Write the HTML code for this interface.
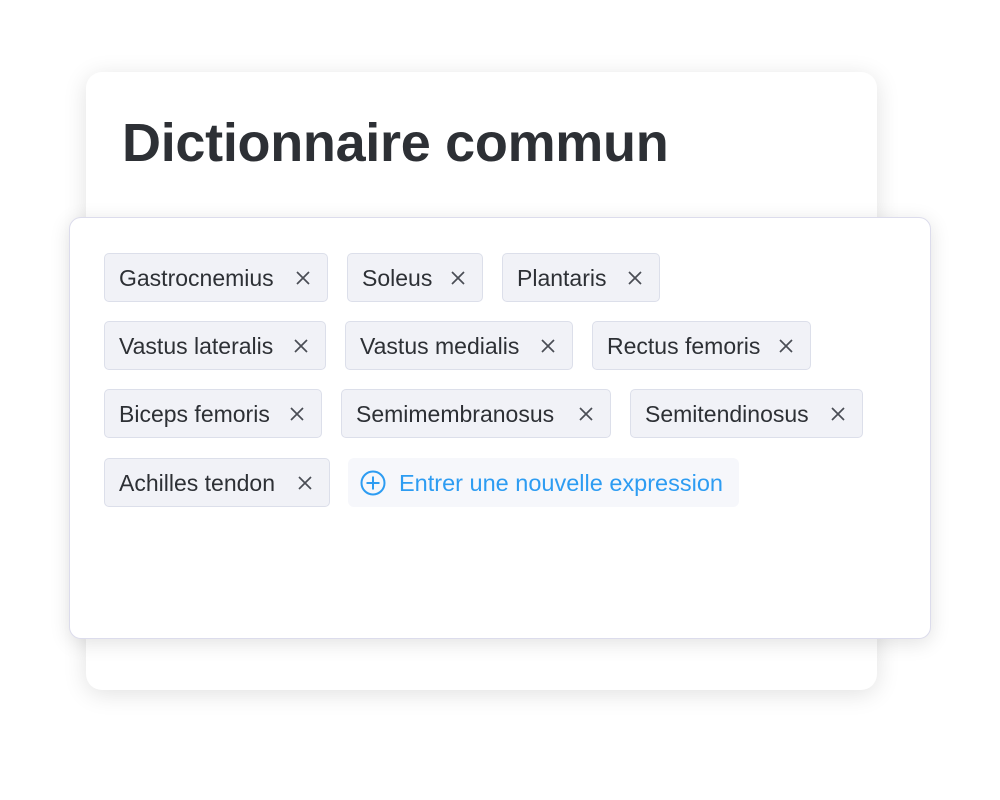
<!DOCTYPE html>
<html><head><meta charset="utf-8"><style>
body{margin:0;width:1000px;height:800px;background:#fff;position:relative;overflow:hidden;font-family:"Liberation Sans",sans-serif;}
.back{position:absolute;left:86px;top:72px;width:791px;height:618px;background:#fff;border-radius:16px;box-shadow:0 4px 24px rgba(0,0,0,0.12);}
.title{position:absolute;left:122px;top:112px;font-size:54px;font-weight:bold;color:#2d3035;letter-spacing:-0.3px;}
.front{position:absolute;left:69px;top:217px;width:860px;height:420px;background:#fff;border:1px solid #dcdcec;border-radius:12px;box-shadow:0 4px 20px rgba(0,0,0,0.12);}
.tag{position:absolute;height:49px;box-sizing:border-box;background:#f1f2f7;border:1.5px solid #dcdfea;border-radius:5px;color:#2d3035;font-size:23px;line-height:48px;padding-left:14px;}
.tag svg{position:absolute;right:17px;top:17px;}
.add{position:absolute;left:348px;top:458px;width:391px;height:49px;background:#f6f7fb;border-radius:6px;color:#2d9cf2;font-size:23.5px;line-height:50px;}
.add span{position:absolute;left:51px;}
.add svg{position:absolute;left:12px;top:12px;}
</style></head><body>
<div class="back"></div>
<div class="title">Dictionnaire commun</div>
<div class="front"></div>
<div class="tag" style="left:104px;top:253px;width:224px">Gastrocnemius<svg width="14" height="14" viewBox="0 0 14 14"><path d="M1 1L13 13M13 1L1 13" stroke="#4a4d55" stroke-width="1.7"/></svg></div>
<div class="tag" style="left:347px;top:253px;width:136px">Soleus<svg width="14" height="14" viewBox="0 0 14 14"><path d="M1 1L13 13M13 1L1 13" stroke="#4a4d55" stroke-width="1.7"/></svg></div>
<div class="tag" style="left:502px;top:253px;width:158px">Plantaris<svg width="14" height="14" viewBox="0 0 14 14"><path d="M1 1L13 13M13 1L1 13" stroke="#4a4d55" stroke-width="1.7"/></svg></div>
<div class="tag" style="left:104px;top:321px;width:222px">Vastus lateralis<svg width="14" height="14" viewBox="0 0 14 14"><path d="M1 1L13 13M13 1L1 13" stroke="#4a4d55" stroke-width="1.7"/></svg></div>
<div class="tag" style="left:345px;top:321px;width:228px">Vastus medialis<svg width="14" height="14" viewBox="0 0 14 14"><path d="M1 1L13 13M13 1L1 13" stroke="#4a4d55" stroke-width="1.7"/></svg></div>
<div class="tag" style="left:592px;top:321px;width:219px">Rectus femoris<svg width="14" height="14" viewBox="0 0 14 14"><path d="M1 1L13 13M13 1L1 13" stroke="#4a4d55" stroke-width="1.7"/></svg></div>
<div class="tag" style="left:104px;top:389px;width:218px">Biceps femoris<svg width="14" height="14" viewBox="0 0 14 14"><path d="M1 1L13 13M13 1L1 13" stroke="#4a4d55" stroke-width="1.7"/></svg></div>
<div class="tag" style="left:341px;top:389px;width:270px">Semimembranosus<svg width="14" height="14" viewBox="0 0 14 14"><path d="M1 1L13 13M13 1L1 13" stroke="#4a4d55" stroke-width="1.7"/></svg></div>
<div class="tag" style="left:630px;top:389px;width:233px">Semitendinosus<svg width="14" height="14" viewBox="0 0 14 14"><path d="M1 1L13 13M13 1L1 13" stroke="#4a4d55" stroke-width="1.7"/></svg></div>
<div class="tag" style="left:104px;top:458px;width:226px">Achilles tendon<svg width="14" height="14" viewBox="0 0 14 14"><path d="M1 1L13 13M13 1L1 13" stroke="#4a4d55" stroke-width="1.7"/></svg></div>
<div class="add"><svg width="26" height="26" viewBox="0 0 26 26"><circle cx="13" cy="13" r="11.5" fill="none" stroke="#2d9cf2" stroke-width="2"/><path d="M13 6.5V19.5M6.5 13H19.5" stroke="#2d9cf2" stroke-width="2"/></svg><span>Entrer une nouvelle expression</span></div>
</body></html>
